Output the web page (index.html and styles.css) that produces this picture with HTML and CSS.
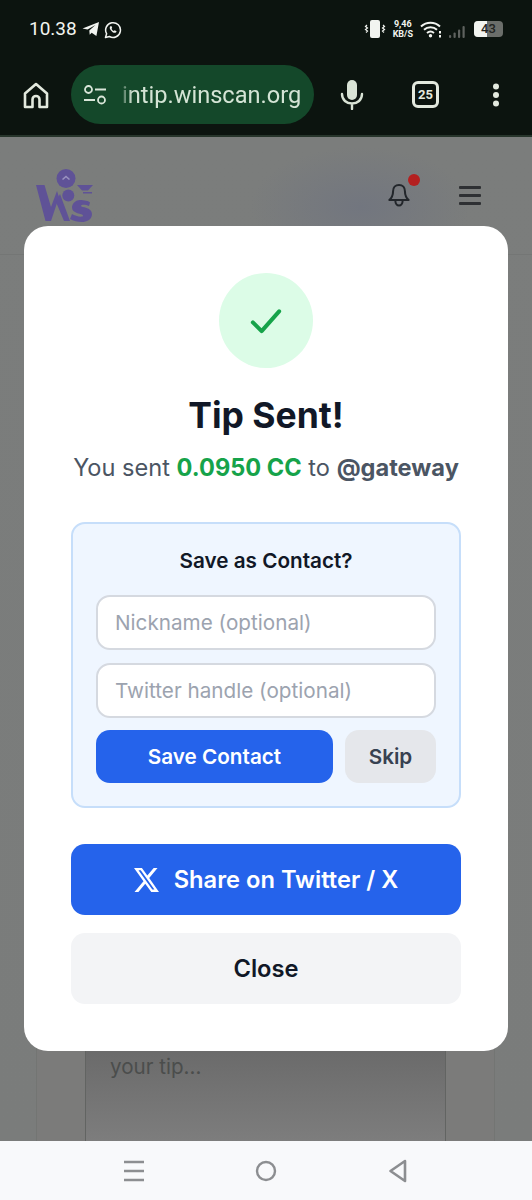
FILE: index.html
```html
<!DOCTYPE html>
<html lang="en">
<head>
<meta charset="utf-8">
<title>Tip Sent</title>
<link rel="stylesheet" href="styles.css">
</head>
<body>
<div class="phone">
  <header class="topbar">
    <div class="status">
      <div class="status-left">
        <span class="time">10.38</span>
        <svg class="st-ic" width="18" height="16" viewBox="0 0 18 16"><path d="M0.5 7.600 17 1l-2.600 14-4.700-3.300-2 2-.4-4.300 6.200-5.400-8 4.600z" fill="#f2f4f0"/></svg>
        <svg class="st-ic" width="18" height="18" viewBox="0 0 18 18"><path d="M1.500 16.500l1.100-3.800A7.400 7.400 0 1 1 5.400 15.500z" fill="none" stroke="#f2f4f0" stroke-width="1.500" stroke-linejoin="round"/><path d="M6.400 5.200c-1 .8-.9 2.200.4 4 1.400 1.900 3.100 2.900 4.500 2.500.8-.2 1.200-.8 1.200-1.500l-1.900-1-.8.8c-1-.4-1.800-1.200-2.300-2.300l.7-.8-.8-1.900z" fill="#f2f4f0"/></svg>
      </div>
      <div class="status-right">
        <svg width="22" height="20" viewBox="0 0 22 20"><rect x="6" y="1" width="10" height="18" rx="2" fill="#f2f4f0"/><path d="M3 6l-1.500 1.500L3.500 9l-2 1.500L3.500 12 2 13.500M19 6l1.500 1.500L18.500 9l2 1.500L18.500 12l1.500 1.500" fill="none" stroke="#f2f4f0" stroke-width="1.200"/></svg>
        <div class="speed"><span>9,46</span><span>KB/S</span></div>
        <svg width="22" height="18" viewBox="0 0 22 18"><path d="M1 6.500c5.500-5 13.500-5 19 0M4 9.800c3.700-3.300 9.300-3.300 13 0M7 13c2-1.700 5-1.700 7 0" fill="none" stroke="#f2f4f0" stroke-width="2"/><circle cx="10.500" cy="15.700" r="1.700" fill="#f2f4f0"/><rect x="19" y="11" width="2" height="2.500" fill="#f2f4f0"/><rect x="19" y="15" width="2" height="2.500" fill="#f2f4f0"/></svg>
        <svg class="signal" width="17" height="12" viewBox="0 0 17 12"><g fill="#5f625f"><rect x="0" y="9" width="2.200" height="3" rx="1"/><rect x="4.500" y="6.500" width="2.200" height="5.500" rx="1"/><rect x="9" y="3.500" width="2.200" height="8.500" rx="1"/><rect x="13.500" y="0" width="2.200" height="12" rx="1"/></g></svg>
        <div class="battery"><span class="battery-fill"></span><span class="battery-num">43</span></div>
      </div>
    </div>
    <div class="toolbar">
      <svg width="28" height="28" viewBox="0 0 28 28"><path d="M3 12.500 14 3l11 9.500V26h-7.500v-7.500a3.500 3.500 0 0 0-7 0V26H3z" fill="none" stroke="#e3e9de" stroke-width="2.600" stroke-linejoin="round"/></svg>
      <div class="omnibox">
        <svg width="24" height="20" viewBox="0 0 24 20"><circle cx="5.500" cy="4.500" r="3.500" fill="none" stroke="#d9e6d9" stroke-width="1.800"/><path d="M12 4.500h11M1 15h11" stroke="#d9e6d9" stroke-width="1.800"/><circle cx="18.500" cy="15" r="3.500" fill="none" stroke="#d9e6d9" stroke-width="1.800"/></svg>
        <span class="url">intip.winscan.org</span>
      </div>
      <svg class="mic" width="24" height="30" viewBox="0 0 24 30"><rect x="7" y="0" width="10" height="20" rx="5" fill="#d9e3d5"/><path d="M2 14c0 6 4.500 9.500 10 9.500S22 20 22 14M12 23.500V29" fill="none" stroke="#d9e3d5" stroke-width="2.400" stroke-linecap="round"/></svg>
      <div class="tabs">25</div>
      <svg class="more" width="8" height="24" viewBox="0 0 8 24"><circle cx="4" cy="3.500" r="3" fill="#e3e9de"/><circle cx="4" cy="12" r="3" fill="#e3e9de"/><circle cx="4" cy="20.500" r="3" fill="#e3e9de"/></svg>
    </div>
  </header>

  <main class="page">
    <div class="site-header">
      <svg class="logo" width="57" height="53" viewBox="0 0 57 53" fill="#5f5297">
        <circle cx="30" cy="9.500" r="9.500"/>
        <path d="M26 10l4-3.500 4 3.500-1 1-3-2.500-3 2.500z" fill="#9a92c0"/>
        <path d="M0 16h8.500l6.500 22 6-16 2 6-8 24H9.500z"/>
        <path d="M20 33l4-8 10 27h-6z"/>
        <path d="M41 16h16l-5 5.500H46z"/>
        <path d="M47 23h9v1.500h-9z"/>
        <circle cx="32.300" cy="26.400" r="6"/>
        <path d="M44 31c4 0 9 1 10 2.500l-1 3.500c-3-1.500-8-2-8 0 0 1.500 11 1 11 8 0 6-6 8-10 8-4 0-9-1-12-3l2-5c3 2 11 4 11 1.500 0-2-11-1.500-11-8 0-4 4-7.500 8-7.500z"/>
      </svg>
      <div class="header-actions">
        <span class="bell-wrap">
          <svg width="22" height="25" viewBox="0 0 24 27"><path d="M12 2c-4 0-6.500 3-6.500 7 0 5-2 7.500-4 9.500h21c-2-2-4-4.500-4-9.500 0-4-2.500-7-6.500-7z M8 19c0 3 1.800 5.500 4 5.500s4-2.500 4-5.500" fill="none" stroke="#22262b" stroke-width="2.200" stroke-linejoin="round"/></svg>
          <span class="dot"></span>
        </span>
        <span class="burger"><i></i><i></i><i></i></span>
      </div>
    </div>
    <div class="bg-card">
      <div class="bg-textarea">your tip...</div>
    </div>
  </main>

  <nav class="navbar">
    <svg width="20" height="22" viewBox="0 0 20 22"><path d="M0 2h20M0 11h20M0 20h20" stroke="#8c8e91" stroke-width="2.400"/></svg>
    <svg width="22" height="22" viewBox="0 0 22 22"><circle cx="11" cy="11" r="9" fill="none" stroke="#8c8e91" stroke-width="2.400"/></svg>
    <svg width="20" height="24" viewBox="0 0 20 24"><path d="M17 2 2.500 12 17 22z" fill="none" stroke="#8c8e91" stroke-width="2.600" stroke-linejoin="round"/></svg>
  </nav>

  <section class="modal">
    <div class="check-circle">
      <svg width="42" height="42" viewBox="0 0 24 24"><path d="M4.500 12.800l5 5L19.500 6.500" fill="none" stroke="#16a34a" stroke-width="2.300" stroke-linecap="round" stroke-linejoin="round"/></svg>
    </div>
    <h1 class="title">Tip Sent!</h1>
    <p class="summary">You sent <b class="amount">0.0950 CC</b> to <b class="handle">@gateway</b></p>
    <div class="contact-card">
      <h2 class="contact-title">Save as Contact?</h2>
      <input class="field" type="text" placeholder="Nickname (optional)">
      <input class="field" type="text" placeholder="Twitter handle (optional)">
      <div class="contact-actions">
        <button class="btn btn-save" type="button">Save Contact</button>
        <button class="btn btn-skip" type="button">Skip</button>
      </div>
    </div>
    <button class="btn btn-share" type="button">
      <svg width="25" height="24" viewBox="0 0 24 22" preserveAspectRatio="none"><path d="M18.900 0h3.700l-8 9.200L24 22h-7.400l-5.800-7.600L4.200 22H.5l8.600-9.800L0 0h7.600l5.200 6.900zm-1.300 19.800h2L6.500 2.100H4.300z" fill="#fff"/></svg>
      <span>Share on Twitter / X</span>
    </button>
    <button class="btn btn-close" type="button">Close</button>
  </section>
</div>
</body>
</html>
```

FILE: styles.css
```css
* { box-sizing: border-box; }
html, body { margin: 0; padding: 0; }
body { font-family: Inter, "Liberation Sans", sans-serif; background: #7b7d7c; }

.phone {
  position: relative;
  width: 532px;
  height: 1200px;
  display: flex;
  flex-direction: column;
  overflow: hidden;
}

.topbar {
  height: 137px;
  flex: none;
  background: #0c140f;
  border-bottom: 2px solid #27352b;
  color: #f2f4f0;
}
.status {
  height: 58px;
  padding: 17px 29px 0 29px;
  display: flex;
  justify-content: space-between;
}
.status-left { display: flex; align-items: flex-start; gap: 4px; height: 24px; }
.time { font-family: Roboto, sans-serif; font-size: 19px; line-height: 24px; margin-right: 1px; }
.st-ic { margin-top: 4px; }
.status-right { display: flex; align-items: center; gap: 7px; height: 24px; }
.signal { margin-top: 5px; }
.speed {
  display: flex;
  flex-direction: column;
  font-family: Roboto, sans-serif;
  font-size: 9px;
  font-weight: 700;
  line-height: 10px;
  text-align: center;
}
.battery {
  position: relative;
  width: 29px;
  height: 16px;
  border-radius: 4px;
  background: #6b6e6a;
  overflow: hidden;
  margin-left: 1px;
}
.battery-fill { position: absolute; left: 0; top: 0; bottom: 0; width: 13px; background: #f2f4f0; }
.battery-num {
  position: absolute;
  inset: 0;
  text-align: center;
  font-family: Roboto, sans-serif;
  font-size: 13px;
  font-weight: 500;
  line-height: 16px;
  color: #22241f;
}

.toolbar {
  height: 59px;
  margin-top: 7px;
  padding: 0 31px 0 22px;
  display: flex;
  align-items: center;
}
.omnibox {
  width: 243px;
  height: 59px;
  margin-left: 21px;
  padding-left: 12px;
  border-radius: 30px;
  background: #14482a;
  display: flex;
  align-items: center;
  gap: 15px;
  overflow: hidden;
}
.url {
  font-family: Roboto, sans-serif;
  font-size: 23.600px;
  color: #d4e4d5;
  white-space: nowrap;
  -webkit-mask-image: linear-gradient(90deg, rgba(0,0,0,.25), #000 10px);
  mask-image: linear-gradient(90deg, rgba(0,0,0,.25), #000 10px);
}
.mic { margin-left: 26px; }
.tabs {
  width: 27px;
  height: 27px;
  margin-left: 48px;
  border: 3px solid #e3e9de;
  border-radius: 6px;
  font-family: Roboto, sans-serif;
  font-size: 13px;
  font-weight: 700;
  line-height: 21px;
  text-align: center;
  color: #e3e9de;
}
.more { margin-left: 53px; }

.page {
  flex: 1;
  position: relative;
  background:
    radial-gradient(ellipse 110px 60px at 360px 70px, #72767f 0%, rgba(114,118,127,0) 100%),
    linear-gradient(#7b7d7c, #7a7c7b);
}
.site-header {
  height: 118px;
  padding: 32px 51px 0 36px;
  display: flex;
  justify-content: space-between;
  align-items: flex-start;
  border-bottom: 1px solid #747675;
}
.logo { display: block; }
.header-actions { display: flex; align-items: center; gap: 49px; padding-top: 14px; }
.bell-wrap { position: relative; display: block; width: 22px; height: 25px; }
.bell-wrap svg { display: block; }
.dot {
  position: absolute;
  top: -9px;
  right: -10px;
  width: 12px;
  height: 12px;
  border-radius: 50%;
  background: #b42020;
}
.burger { display: flex; flex-direction: column; gap: 5px; width: 22px; }
.burger i { display: block; height: 3px; background: #2e3033; border-radius: 1px; }

.bg-card {
  position: absolute;
  left: 36px;
  width: 459px;
  top: 600px;
  bottom: 0;
  background: #7b7b7a;
  border: 1px solid #737573;
  border-bottom: 0;
  padding: 0 48px;
}
.bg-textarea {
  height: 100%;
  border: 1px solid #626462;
  border-bottom: 0;
  padding: 316px 24px 0;
  font-size: 20.600px;
  line-height: 24px;
  color: #4b4d4c;
  background: linear-gradient(#7b7b7a 0%, #7b7b7a 60%, #6b6b6b 78%, #7d7d7d 100%);
}

.navbar {
  height: 59px;
  flex: none;
  background: #f8f9fb;
  display: flex;
  align-items: center;
  justify-content: center;
  gap: 111px;
  padding-top: 1px;
}

.modal {
  position: absolute;
  left: 24px;
  top: 226px;
  width: 484px;
  height: 825px;
  background: #fff;
  border-radius: 24px;
  padding: 47px 47px 0;
  display: flex;
  flex-direction: column;
  align-items: stretch;
}
.check-circle {
  width: 94px;
  height: 95px;
  align-self: center;
  border-radius: 50%;
  background: #dcfce7;
  display: flex;
  align-items: center;
  justify-content: center;
}
.title {
  margin: 24px 0 0;
  font-size: 35.500px;
  font-weight: 700;
  line-height: 47px;
  color: #111827;
  text-align: center;
}
.summary {
  margin: 12px -10px 0;
  font-size: 23.600px;
  line-height: 33px;
  color: #4b5563;
  text-align: center;
  white-space: nowrap;
}
.amount { color: #16a34a; font-weight: 700; }
.handle { font-weight: 700; }

.contact-card {
  margin-top: 38px;
  height: 286px;
  padding: 23px 23px 0;
  border: 2px solid #c6defa;
  border-radius: 14px;
  background: #eff6ff;
  display: flex;
  flex-direction: column;
}
.contact-title {
  margin: 0 0 20px;
  font-size: 20.700px;
  font-weight: 600;
  line-height: 28px;
  color: #111827;
  text-align: center;
}
.field {
  width: 100%;
  height: 55px;
  margin-bottom: 13px;
  padding: 0 17px;
  border: 2px solid #d5d9e0;
  border-radius: 14px;
  background: #fff;
  font-family: inherit;
  font-size: 20.700px;
  color: #111827;
}
.field::placeholder { color: #9ca3af; opacity: 1; }
.contact-actions { display: flex; gap: 12px; margin-top: -1px; }

.btn {
  border: 0;
  font-family: inherit;
  display: flex;
  align-items: center;
  justify-content: center;
  padding: 0;
}
.btn-save {
  flex: 1;
  height: 53px;
  border-radius: 14px;
  background: #2563eb;
  color: #fff;
  font-size: 20.700px;
  font-weight: 600;
}
.btn-skip {
  width: 91px;
  height: 53px;
  border-radius: 14px;
  background: #e5e7eb;
  color: #374151;
  font-size: 20.700px;
  font-weight: 600;
}
.btn-share {
  height: 71px;
  margin-top: 36px;
  gap: 15px;
  border-radius: 14px;
  background: #2563eb;
  color: #fff;
  font-size: 23.700px;
  font-weight: 600;
}
.btn-close {
  height: 71px;
  margin-top: 18px;
  padding-bottom: 1px;
  border-radius: 14px;
  background: #f3f4f6;
  color: #111827;
  font-size: 23.700px;
  font-weight: 600;
}
```
